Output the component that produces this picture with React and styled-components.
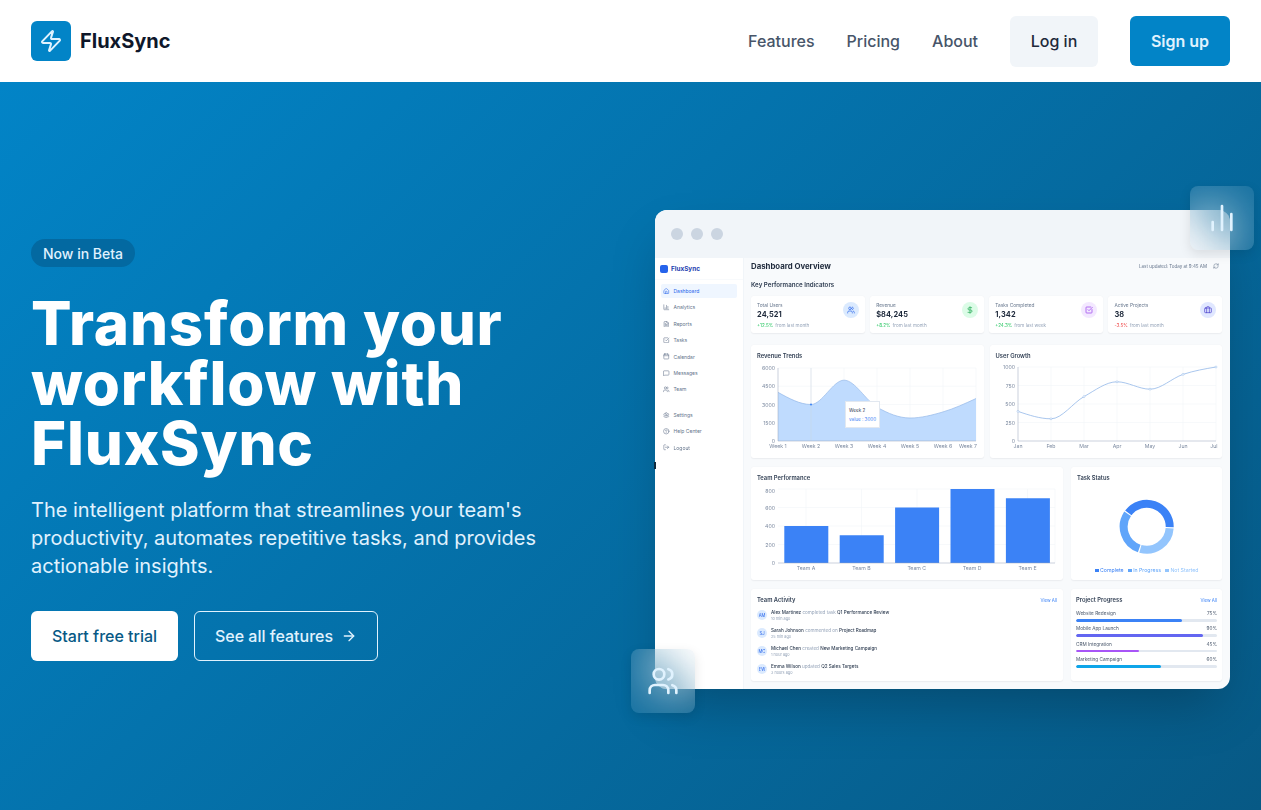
import React from "react";
import styled, { createGlobalStyle } from "styled-components";
import {
  ArrowRight,
  Briefcase,
  Calendar,
  ChartNoAxesColumn,
  ChartColumn,
  CircleHelp,
  DollarSign,
  FileText,
  House,
  LogOut,
  MessageSquare,
  RefreshCw,
  Settings,
  SquareCheckBig,
  Users,
  Zap,
} from "lucide-react";

const GlobalStyle = createGlobalStyle`
  html, body {
    margin: 0;
    padding: 0;
    overflow: hidden;
    background: #ffffff;
    font-family: Inter, "Liberation Sans", sans-serif;
  }
  * { box-sizing: border-box; }
`;

// 상단 네비게이션
const Header = styled.header`
  height: 82px;
  background: #ffffff;
  padding: 0 31px;
  display: flex;
  align-items: center;
  justify-content: space-between;
`;

const Brand = styled.div`
  display: flex;
  align-items: center;
  gap: 9px;
`;

const BrandMark = styled.div`
  width: 40px;
  height: 40px;
  border-radius: 6px;
  background: #0284c7;
  color: #e0f2fe;
  display: flex;
  align-items: center;
  justify-content: center;
`;

const BrandName = styled.span`
  font-family: Inter, sans-serif;
  font-weight: 700;
  font-size: 20px;
  color: #0f172a;
`;

const Nav = styled.nav`
  display: flex;
  align-items: center;
  gap: 32px;
`;

const NavLink = styled.a`
  font-size: 16px;
  font-weight: 500;
  color: #475569;
`;

const LoginButton = styled.button`
  width: 88px;
  height: 51px;
  border: none;
  border-radius: 6px;
  background: #f1f5f9;
  color: #1e293b;
  font: 500 16px Inter, sans-serif;
`;

const SignupButton = styled.button`
  width: 100px;
  height: 50px;
  border: none;
  border-radius: 6px;
  background: #0284c7;
  color: #e0f2fe;
  font: 600 16px Inter, sans-serif;
`;

// 히어로 영역
const Hero = styled.main`
  height: 728px;
  padding: 7px 31px 0;
  background: linear-gradient(135deg, #0284c7 0%, #075985 100%);
  display: flex;
  align-items: center;
  justify-content: space-between;
`;

const HeroCopy = styled.section`
  width: 530px;
  padding-top: 1px;
`;

const Badge = styled.span`
  display: inline-flex;
  align-items: center;
  height: 28px;
  padding: 0 12px;
  border-radius: 14px;
  background: #0369a1;
  color: #e0f2fe;
  font-size: 14px;
  font-weight: 500;
`;

const Headline = styled.h1`
  margin: 26px 0 0;
  font-family: Inter, sans-serif;
  font-weight: 800;
  font-size: 60px;
  line-height: 60px;
  letter-spacing: 0.8px;
  color: #ffffff;
`;

const Lead = styled.p`
  margin: 23px 0 0;
  font-size: 20px;
  line-height: 28px;
  color: #e0f2fe;
`;

const Actions = styled.div`
  margin-top: 31px;
  display: flex;
  gap: 16px;
`;

const PrimaryAction = styled.button`
  height: 50px;
  width: 147px;
  border: none;
  border-radius: 6px;
  background: #ffffff;
  color: #075985;
  font: 500 16px Inter, sans-serif;
`;

const SecondaryAction = styled.button`
  height: 50px;
  width: 184px;
  border: 1px solid #e0f2fe;
  border-radius: 6px;
  background: transparent;
  color: #e0f2fe;
  font: 500 16px Inter, sans-serif;
  display: flex;
  align-items: center;
  justify-content: center;
  gap: 8px;
`;

// 대시보드 미리보기 창
const Preview = styled.section`
  position: relative;
  width: 575px;
  height: 479px;
`;

const Window = styled.div`
  width: 100%;
  height: 100%;
  border-radius: 12px;
  overflow: hidden;
  background: #f8fafc;
  box-shadow: 0 25px 50px -12px rgba(0, 0, 0, 0.25);
  display: flex;
  flex-direction: column;
`;

const WindowBar = styled.div`
  height: 48px;
  flex: none;
  background: #f1f5f9;
  padding-left: 16px;
  display: flex;
  align-items: center;
  gap: 8px;
`;

const WindowDot = styled.span`
  width: 12px;
  height: 12px;
  border-radius: 50%;
  background: #cbd5e1;
`;

const WindowBody = styled.div`
  flex: 1;
  display: flex;
  min-height: 0;
  filter: blur(0.35px);
`;

const EdgeMark = styled.span`
  position: absolute;
  left: -1px;
  top: 252px;
  width: 2px;
  height: 7px;
  background: #0f2a3d;
`;

const GlassTile = styled.div`
  position: absolute;
  width: 64px;
  height: 64px;
  border-radius: 8px;
  background: rgba(255, 255, 255, 0.08);
  backdrop-filter: blur(24px);
  box-shadow: 0 4px 12px rgba(0, 0, 0, 0.1);
  color: #e0f2fe;
  display: flex;
  align-items: center;
  justify-content: center;
  top: ${(props) => props.$top};
  left: ${(props) => props.$left};
`;

const Sidebar = styled.aside`
  width: 89px;
  flex: none;
  background: #ffffff;
  border-right: 1px solid #f1f5f9;
`;

const SideBrand = styled.div`
  height: 22px;
  padding-left: 5px;
  border-bottom: 1px solid #f8fafc;
  display: flex;
  align-items: center;
  gap: 3px;
  font-size: 6.4px;
  font-weight: 700;
  color: #1e40af;
`;

const SideMark = styled.span`
  width: 8px;
  height: 8px;
  border-radius: 2px;
  background: #2563eb;
`;

const SideNav = styled.div`
  padding: ${(props) => props.$pad || "5px"} 6px 0;
  margin-top: ${(props) => props.$gap || "0"};
  display: flex;
  flex-direction: column;
  gap: 2.4px;
`;

const SideItem = styled.div`
  height: 14px;
  padding-left: 2px;
  border-radius: 2px;
  display: flex;
  align-items: center;
  gap: 4px;
  font-size: 5px;
  background: ${(props) => (props.$active ? "#eff6ff" : "transparent")};
  color: ${(props) => (props.$active ? "#2563eb" : "#64748b")};
`;

const Content = styled.div`
  flex: 1;
  min-width: 0;
  padding: 3px 8px 0 7px;
`;

const TitleRow = styled.div`
  height: 10px;
  display: flex;
  align-items: center;
  justify-content: space-between;
`;

const PageTitle = styled.div`
  font-size: 7.8px;
  font-weight: 700;
  color: #1e293b;
`;

const Updated = styled.div`
  display: flex;
  align-items: center;
  gap: 6px;
  padding-right: 3px;
  font-size: 4.5px;
  color: #64748b;
`;

const SectionTitle = styled.div`
  height: 10px;
  margin-top: 9px;
  font-size: 6.2px;
  line-height: 10px;
  font-weight: 600;
  color: #334155;
`;

const CardRow = styled.div`
  display: grid;
  grid-template-columns: ${(props) => props.$cols};
  gap: ${(props) => props.$gap};
  margin-top: ${(props) => props.$top};
`;

const Card = styled.div`
  height: ${(props) => props.$height};
  background: #ffffff;
  border-radius: 3px;
  box-shadow: 0 0.5px 1.5px rgba(15, 23, 42, 0.06);
  padding: ${(props) => props.$padding || "7px 6px 0"};
  min-width: 0;
`;

const KpiCard = styled(Card)`
  position: relative;
  padding: 6px 6px 0;
`;

const KpiLabel = styled.div`
  font-size: 4.8px;
  line-height: 6px;
  color: #64748b;
`;

const KpiValue = styled.div`
  margin-top: 1px;
  font-size: 7.4px;
  line-height: 11px;
  font-weight: 700;
  letter-spacing: 0.1px;
  color: #1e293b;
`;

const KpiDelta = styled.div`
  margin-top: 3px;
  font-size: 4.6px;
  line-height: 6px;
  color: #94a3b8;
  span {
    color: ${(props) => (props.$down ? "#ef4444" : "#22c55e")};
    margin-right: 2px;
  }
`;

const KpiIcon = styled.div`
  position: absolute;
  top: 6px;
  right: 6px;
  width: 16px;
  height: 16px;
  border-radius: 50%;
  background: ${(props) => props.$bg};
  color: ${(props) => props.$color};
  display: flex;
  align-items: center;
  justify-content: center;
`;

const CardTitle = styled.div`
  height: 8px;
  font-size: 5.8px;
  line-height: 8px;
  font-weight: 600;
  color: #334155;
`;

const CardHead = styled.div`
  display: flex;
  align-items: center;
  justify-content: space-between;
`;

const ViewAll = styled.span`
  font-size: 4.4px;
  color: #3b82f6;
`;

const ChartBox = styled.div`
  position: relative;
  margin: 3px -6px 0;
`;

const ChartSvg = styled.svg`
  display: block;
  text {
    font-family: Inter, sans-serif;
    font-size: 5.2px;
    fill: #7c8aa0;
  }
`;

const ChartTooltip = styled.div`
  position: absolute;
  left: 94px;
  top: 38px;
  width: 35px;
  height: 27px;
  padding: 4px 3px;
  background: #ffffff;
  border: 0.5px solid #e2e8f0;
  font-size: 4.6px;
  line-height: 9px;
  white-space: nowrap;
  color: #334155;
  div + div {
    color: #3b82f6;
  }
`;

const Legend = styled.div`
  margin-top: 2px;
  display: flex;
  justify-content: center;
  gap: 4px;
  font-size: 5.2px;
  line-height: 6px;
`;

const LegendItem = styled.span`
  display: flex;
  align-items: center;
  gap: 1.5px;
  color: ${(props) => props.$color};
  &::before {
    content: "";
    width: 4px;
    height: 3px;
    background: ${(props) => props.$color};
  }
`;

const ActivityList = styled.div`
  margin-top: 2px;
`;

const ActivityRow = styled.div`
  height: 18px;
  display: flex;
  align-items: center;
  gap: 4px;
`;

const Avatar = styled.span`
  width: 10px;
  height: 10px;
  border-radius: 50%;
  flex: none;
  background: #dbeafe;
  color: #2563eb;
  font-size: 4.2px;
  display: flex;
  align-items: center;
  justify-content: center;
`;

const ActivityText = styled.div`
  font-size: 4.6px;
  line-height: 6px;
  color: #94a3b8;
  b {
    font-weight: 500;
    color: #334155;
  }
`;

const ActivityTime = styled.div`
  font-size: 3.8px;
  line-height: 5px;
  color: #94a3b8;
`;

const ProgressList = styled.div`
  margin-top: 5px;
  display: flex;
  flex-direction: column;
  gap: 2.9px;
`;

const ProgressLabel = styled.div`
  height: 10px;
  padding-bottom: 2px;
  display: flex;
  align-items: center;
  justify-content: space-between;
  font-size: 4.7px;
  color: #475569;
`;

const ProgressTrack = styled.div`
  height: 2.5px;
  border-radius: 2px;
  background: #e2e8f0;
  overflow: hidden;
`;

const ProgressFill = styled.div`
  height: 100%;
  border-radius: 2px;
  background: ${(props) => props.$color};
`;

const sideTop = [
  ["Dashboard", House],
  ["Analytics", ChartColumn],
  ["Reports", FileText],
  ["Tasks", SquareCheckBig],
  ["Calendar", Calendar],
  ["Messages", MessageSquare],
  ["Team", Users],
];

const sideBottom = [
  ["Settings", Settings],
  ["Help Center", CircleHelp],
  ["Logout", LogOut],
];

const kpis = [
  { label: "Total Users", value: "24,521", delta: "+12.5%", note: "from last month", icon: Users, bg: "#dbeafe", color: "#2563eb" },
  { label: "Revenue", value: "$84,245", delta: "+8.2%", note: "from last month", icon: DollarSign, bg: "#dcfce7", color: "#16a34a" },
  { label: "Tasks Completed", value: "1,342", delta: "+24.3%", note: "from last week", icon: SquareCheckBig, bg: "#f3e8ff", color: "#9333ea" },
  { label: "Active Projects", value: "38", delta: "-3.5%", note: "from last month", icon: Briefcase, bg: "#e0e7ff", color: "#4338ca", down: true },
];

const activities = [
  ["AM", "Alex Martinez", "completed task", "Q1 Performance Review", "10 min ago"],
  ["SJ", "Sarah Johnson", "commented on", "Project Roadmap", "25 min ago"],
  ["MC", "Michael Chen", "created", "New Marketing Campaign", "1 hour ago"],
  ["EW", "Emma Wilson", "updated", "Q2 Sales Targets", "3 hours ago"],
];

const projects = [
  ["Website Redesign", 75, "#3b82f6"],
  ["Mobile App Launch", 90, "#6366f1"],
  ["CRM Integration", 45, "#a855f7"],
  ["Marketing Campaign", 60, "#0ea5e9"],
];

// recharts monotone 곡선과 같은 방식으로 경로 계산
const monotonePath = (pts) => {
  const n = pts.length;
  const slopes = [];
  for (let i = 0; i < n - 1; i++) {
    slopes.push((pts[i + 1][1] - pts[i][1]) / (pts[i + 1][0] - pts[i][0]));
  }
  const tangents = [];
  for (let i = 1; i < n - 1; i++) {
    const a = slopes[i - 1];
    const b = slopes[i];
    tangents[i] = (Math.sign(a) + Math.sign(b)) * Math.min(Math.abs(a), Math.abs(b), 0.5 * Math.abs((a + b) / 2));
  }
  tangents[0] = (3 * slopes[0] - tangents[1]) / 2;
  tangents[n - 1] = (3 * slopes[n - 2] - tangents[n - 2]) / 2;
  let d = `M${pts[0][0]},${pts[0][1]}`;
  for (let i = 0; i < n - 1; i++) {
    const dx = (pts[i + 1][0] - pts[i][0]) / 3;
    d += `C${pts[i][0] + dx},${pts[i][1] + dx * tangents[i]} ${pts[i + 1][0] - dx},${pts[i + 1][1] - dx * tangents[i + 1]} ${pts[i + 1][0]},${pts[i + 1][1]}`;
  }
  return d;
};

const RevenueChart = () => {
  const values = [4000, 3000, 5000, 2780, 1890, 2390, 3490];
  const xs = values.map((_, i) => 778 + i * 33);
  const y = (v) => 441 - (v / 6000) * 73;
  const pts = values.map((v, i) => [xs[i], y(v)]);
  const line = monotonePath(pts);
  return (
    <ChartSvg width="233" height="90" viewBox="751 363 233 90">
      {[6000, 4500, 3000, 1500].map((v) => (
        <line key={v} x1="778" x2="976" y1={y(v)} y2={y(v)} stroke="#f1f5f9" strokeWidth="0.6" />
      ))}
      {xs.slice(1).map((x) => (
        <line key={x} x1={x} x2={x} y1="368" y2="441" stroke="#f1f5f9" strokeWidth="0.6" />
      ))}
      <path d={`${line}L976,441L778,441Z`} fill="#bfdbfe" />
      <path d={line} fill="none" stroke="#93b8e8" strokeWidth="0.7" />
      <line x1="811" x2="811" y1="368" y2="441" stroke="#cbd5e1" strokeWidth="0.5" />
      <circle cx="811" cy={y(3000)} r="1" fill="#3b82f6" />
      <line x1="778" x2="778" y1="368" y2="441" stroke="#94a3b8" strokeWidth="0.5" />
      <line x1="778" x2="976" y1="441" y2="441" stroke="#94a3b8" strokeWidth="0.5" />
      {[6000, 4500, 3000, 1500, 0].map((v) => (
        <text key={v} x="775" y={y(v) + 2} textAnchor="end">{v}</text>
      ))}
      {xs.map((x, i) => (
        <text key={x} x={i === 6 ? 968 : x} y="447.5" textAnchor="middle">{`Week ${i + 1}`}</text>
      ))}
    </ChartSvg>
  );
};

const GrowthChart = () => {
  const values = [400, 300, 600, 800, 700, 900, 1000];
  const months = ["Jan", "Feb", "Mar", "Apr", "May", "Jun", "Jul"];
  const xs = values.map((_, i) => 1018 + i * 33);
  const y = (v) => 441 - (v / 1000) * 74;
  const pts = values.map((v, i) => [xs[i], y(v)]);
  return (
    <ChartSvg width="233" height="90" viewBox="990 363 233 90">
      {[1000, 750, 500, 250].map((v) => (
        <line key={v} x1="1018" x2="1216" y1={y(v)} y2={y(v)} stroke="#f1f5f9" strokeWidth="0.6" />
      ))}
      {xs.slice(1).map((x) => (
        <line key={x} x1={x} x2={x} y1="367" y2="441" stroke="#f1f5f9" strokeWidth="0.6" />
      ))}
      <line x1="1018" x2="1018" y1="367" y2="441" stroke="#94a3b8" strokeWidth="0.5" />
      <line x1="1018" x2="1216" y1="441" y2="441" stroke="#94a3b8" strokeWidth="0.5" />
      <path d={monotonePath(pts)} fill="none" stroke="#93b8e8" strokeWidth="0.8" />
      {pts.map(([px, py]) => (
        <circle key={px} cx={px} cy={py} r="1" fill="#ffffff" stroke="#93b8e8" strokeWidth="0.5" />
      ))}
      {[1000, 750, 500, 250, 0].map((v) => (
        <text key={v} x="1015" y={y(v) + 2} textAnchor="end">{v}</text>
      ))}
      {months.map((m, i) => (
        <text key={m} x={i === 6 ? xs[i] - 2 : xs[i]} y="447.5" textAnchor="middle">{m}</text>
      ))}
    </ChartSvg>
  );
};

const PerformanceChart = () => {
  const values = [400, 300, 600, 800, 700];
  const y = (v) => 563 - (v / 800) * 74;
  return (
    <ChartSvg width="312" height="90" viewBox="751 485 312 90">
      {[800, 600, 400, 200].map((v) => (
        <line key={v} x1="778" x2="1055" y1={y(v)} y2={y(v)} stroke="#f1f5f9" strokeWidth="0.6" />
      ))}
      {[806, 861.5, 917, 972, 1027.5, 1055].map((x) => (
        <line key={x} x1={x} x2={x} y1="489" y2="563" stroke="#f1f5f9" strokeWidth="0.6" />
      ))}
      {values.map((v, i) => (
        <rect key={i} x={784.3 + i * 55.4} y={y(v)} width="44" height={563 - y(v)} fill="#3b82f6" />
      ))}
      <line x1="778" x2="1055" y1="563" y2="563" stroke="#94a3b8" strokeWidth="0.5" />
      {[800, 600, 400, 200, 0].map((v) => (
        <text key={v} x="775" y={Math.max(y(v) + 2, 493)} textAnchor="end">{v}</text>
      ))}
      {["A", "B", "C", "D", "E"].map((t, i) => (
        <text key={t} x={806 + i * 55.4} y="570" textAnchor="middle">{`Team ${t}`}</text>
      ))}
    </ChartSvg>
  );
};

const arcPath = (cx, cy, r, from, to) => {
  const point = (deg) => {
    const rad = (deg * Math.PI) / 180;
    return [cx + r * Math.sin(rad), cy - r * Math.cos(rad)];
  };
  const [x1, y1] = point(from);
  const [x2, y2] = point(to);
  return `M${x1},${y1}A${r},${r} 0 ${to - from > 180 ? 1 : 0} 1 ${x2},${y2}`;
};

const StatusDonut = () => (
  <ChartSvg width="151" height="80" viewBox="1071 485 151 80">
    <path d={arcPath(1146.7, 526.7, 23, -53, 91)} fill="none" stroke="#3b82f6" strokeWidth="8" />
    <path d={arcPath(1146.7, 526.7, 23, 94, 196)} fill="none" stroke="#93c5fd" strokeWidth="8" />
    <path d={arcPath(1146.7, 526.7, 23, 199, 304)} fill="none" stroke="#60a5fa" strokeWidth="8" />
  </ChartSvg>
);

const App = () => (
  <>
    <GlobalStyle />
    <Header>
      <Brand>
        <BrandMark>
          <Zap size={24} strokeWidth={2} />
        </BrandMark>
        <BrandName>FluxSync</BrandName>
      </Brand>
      <Nav>
        <NavLink>Features</NavLink>
        <NavLink>Pricing</NavLink>
        <NavLink>About</NavLink>
        <LoginButton>Log in</LoginButton>
        <SignupButton>Sign up</SignupButton>
      </Nav>
    </Header>
    <Hero>
      <HeroCopy>
        <Badge>Now in Beta</Badge>
        <Headline>
          Transform your
          <br />
          workflow with
          <br />
          FluxSync
        </Headline>
        <Lead>
          The intelligent platform that streamlines your team's productivity, automates repetitive tasks, and provides
          actionable insights.
        </Lead>
        <Actions>
          <PrimaryAction>Start free trial</PrimaryAction>
          <SecondaryAction>
            See all features
            <ArrowRight size={16} />
          </SecondaryAction>
        </Actions>
      </HeroCopy>
      <Preview>
        <Window>
          <WindowBar>
            <WindowDot />
            <WindowDot />
            <WindowDot />
          </WindowBar>
          <WindowBody>
            <Sidebar>
              <SideBrand>
                <SideMark />
                FluxSync
              </SideBrand>
              <SideNav $pad="4px">
                {sideTop.map(([name, Icon], i) => (
                  <SideItem key={name} $active={i === 0}>
                    <Icon size={6.5} />
                    {name}
                  </SideItem>
                ))}
              </SideNav>
              <SideNav $gap="6.6px">
                {sideBottom.map(([name, Icon]) => (
                  <SideItem key={name}>
                    <Icon size={6.5} />
                    {name}
                  </SideItem>
                ))}
              </SideNav>
            </Sidebar>
            <Content>
              <TitleRow>
                <PageTitle>Dashboard Overview</PageTitle>
                <Updated>
                  Last updated: Today at 9:45 AM
                  <RefreshCw size={6} />
                </Updated>
              </TitleRow>
              <SectionTitle>Key Performance Indicators</SectionTitle>
              <CardRow $cols="repeat(4, 1fr)" $gap="5.5px" $top="6px">
                {kpis.map((k) => (
                  <KpiCard key={k.label} $height="37px">
                    <KpiLabel>{k.label}</KpiLabel>
                    <KpiValue>{k.value}</KpiValue>
                    <KpiDelta $down={k.down}>
                      <span>{k.delta}</span>
                      {k.note}
                    </KpiDelta>
                    <KpiIcon $bg={k.bg} $color={k.color}>
                      <k.icon size={8} />
                    </KpiIcon>
                  </KpiCard>
                ))}
              </CardRow>
              <CardRow $cols="1fr 1fr" $gap="6px" $top="12px">
                <Card $height="113px">
                  <CardTitle>Revenue Trends</CardTitle>
                  <ChartBox>
                    <RevenueChart />
                    <ChartTooltip>
                      <div>Week 2</div>
                      <div>value : 3000</div>
                    </ChartTooltip>
                  </ChartBox>
                </Card>
                <Card $height="113px">
                  <CardTitle>User Growth</CardTitle>
                  <ChartBox>
                    <GrowthChart />
                  </ChartBox>
                </Card>
              </CardRow>
              <CardRow $cols="312px 1fr" $gap="8px" $top="9px">
                <Card $height="113px">
                  <CardTitle>Team Performance</CardTitle>
                  <ChartBox>
                    <PerformanceChart />
                  </ChartBox>
                </Card>
                <Card $height="113px">
                  <CardTitle>Task Status</CardTitle>
                  <ChartBox>
                    <StatusDonut />
                    <Legend>
                      <LegendItem $color="#3b82f6">Complete</LegendItem>
                      <LegendItem $color="#60a5fa">In Progress</LegendItem>
                      <LegendItem $color="#93c5fd">Not Started</LegendItem>
                    </Legend>
                  </ChartBox>
                </Card>
              </CardRow>
              <CardRow $cols="312px 1fr" $gap="8px" $top="9px">
                <Card $height="92px">
                  <CardHead>
                    <CardTitle>Team Activity</CardTitle>
                    <ViewAll>View All</ViewAll>
                  </CardHead>
                  <ActivityList>
                    {activities.map(([initials, who, verb, what, when]) => (
                      <ActivityRow key={initials}>
                        <Avatar>{initials}</Avatar>
                        <div>
                          <ActivityText>
                            <b>{who}</b> {verb} <b>{what}</b>
                          </ActivityText>
                          <ActivityTime>{when}</ActivityTime>
                        </div>
                      </ActivityRow>
                    ))}
                  </ActivityList>
                </Card>
                <Card $height="92px" $padding="7px 5px 0">
                  <CardHead>
                    <CardTitle>Project Progress</CardTitle>
                    <ViewAll>View All</ViewAll>
                  </CardHead>
                  <ProgressList>
                    {projects.map(([name, pct, color]) => (
                      <div key={name}>
                        <ProgressLabel>
                          <span>{name}</span>
                          <span>{pct}%</span>
                        </ProgressLabel>
                        <ProgressTrack>
                          <ProgressFill $color={color} style={{ width: `${pct}%` }} />
                        </ProgressTrack>
                      </div>
                    ))}
                  </ProgressList>
                </Card>
              </CardRow>
            </Content>
          </WindowBody>
        </Window>
        <EdgeMark />
        <GlassTile $top="-24px" $left="535px">
          <ChartNoAxesColumn size={32} />
        </GlassTile>
        <GlassTile $top="439px" $left="-24px">
          <Users size={32} />
        </GlassTile>
      </Preview>
    </Hero>
  </>
);

export default App;
